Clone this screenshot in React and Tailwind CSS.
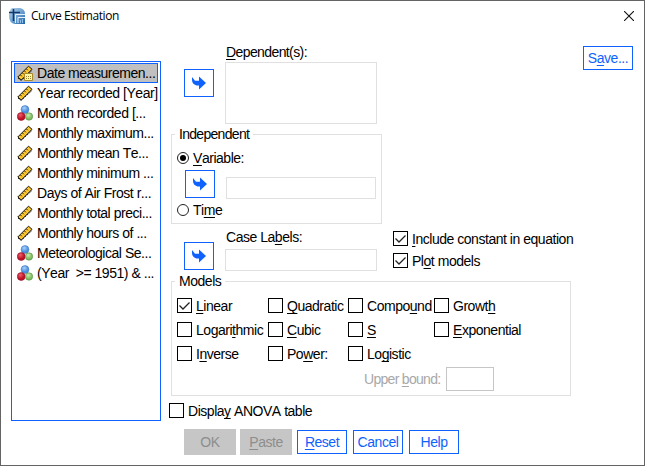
import React from "react";

function Ruler({ calc }) {
  return (
    <svg width="16" height="16" viewBox="0 0 16 16" className="shrink-0">
      <path d="M.8 12 11.500 1.200 15 4.300 4.300 15Z" fill="#fdc72f" stroke="#111" strokeWidth="1" />
      <path d="M3.500 10l1.300 1.300M5.500 8l1.300 1.300M7.500 6l1.300 1.300M9.500 4l1.300 1.300" stroke="#222" />
      <path d="M1 13 4 15.500 15 5.500" fill="none" stroke="#222" strokeWidth="1" strokeDasharray="2 1" />
      {calc && (
        <g>
          <path d="M7.500 8.500h8v7h-8z" fill="#fff6a0" stroke="#a98a28" />
          <path d="M9 11.500h5M9 13.500h5" stroke="#9b8230" strokeDasharray="1 1" />
        </g>
      )}
    </svg>
  );
}

function Nominal() {
  return (
    <svg width="16" height="16" viewBox="0 0 16 16" className="shrink-0">
      <defs>
        <radialGradient id="nb" cx=".4" cy=".3"><stop offset="0" stopColor="#a9d3ff" /><stop offset="1" stopColor="#4d8fe0" /></radialGradient>
        <radialGradient id="nr" cx=".4" cy=".3"><stop offset="0" stopColor="#f0606c" /><stop offset="1" stopColor="#be1026" /></radialGradient>
        <radialGradient id="ng" cx=".4" cy=".3"><stop offset="0" stopColor="#c9efb0" /><stop offset="1" stopColor="#7fbd62" /></radialGradient>
      </defs>
      <circle cx="8" cy="4.500" r="3.900" fill="url(#nb)" stroke="#3c78c0" strokeWidth=".6" />
      <circle cx="4.200" cy="11.500" r="3.900" fill="url(#nr)" stroke="#901020" strokeWidth=".6" />
      <circle cx="12" cy="11.500" r="3.700" fill="url(#ng)" stroke="#4f8a3c" strokeWidth=".6" />
    </svg>
  );
}

function AppIcon() {
  return (
    <svg width="16" height="16" viewBox="0 0 16 16" className="shrink-0">
      <defs>
        <linearGradient id="ai" x1="0" y1="0" x2="1" y2="1"><stop offset="0" stopColor="#b9d3ea" /><stop offset=".5" stopColor="#6fa3d2" /><stop offset="1" stopColor="#1d62a8" /></linearGradient>
      </defs>
      <path d="M3 0h8q5 1 5 6v10H6Q0 15 0 8 0 2 3 0Z" fill="url(#ai)" />
      <path d="M0 4.500h11M4.500 1v12" stroke="#12386e" strokeWidth="1.600" />
      <path d="M6.500 15V6.500H16M9 15V9.500h7" fill="none" stroke="#e4f0fa" strokeWidth="1" />
      <path d="M11.500 15v-3M13.500 15v-4" stroke="#8fc0ea" />
    </svg>
  );
}

/* The letter after "_" is the keyboard mnemonic. */
function Label({ text, className = "" }) {
  const i = text.indexOf("_");
  return (
    <span className={`whitespace-pre ${className}`}>
      {i < 0 ? text : (
        <>
          {text.slice(0, i)}
          <span className="underline decoration-1 underline-offset-2 [text-decoration-skip-ink:none]">{text[i + 1]}</span>
          {text.slice(i + 2)}
        </>
      )}
    </span>
  );
}

function Check({ text, checked, className = "" }) {
  return (
    <div className={`flex h-[15px] items-center gap-1 ${className}`}>
      <span className="h-[15px] w-[15px] shrink-0 border border-black">
        {checked && (
          <svg width="13" height="13" viewBox="0 0 13 13" className="block">
            <path d="M1.500 6.500 5 10 11.500 3.500" fill="none" stroke="#222" strokeWidth="1.300" />
          </svg>
        )}
      </span>
      <Label text={text} />
    </div>
  );
}

function Radio({ text, checked }) {
  return (
    <div className="flex h-3 items-center gap-1">
      <span className="flex h-3 w-3 shrink-0 items-center justify-center rounded-full border border-[#222]">
        {checked && <span className="h-1.5 w-1.5 rounded-full bg-black" />}
      </span>
      <Label text={text} />
    </div>
  );
}

function Move({ className = "" }) {
  return (
    <button className={`flex h-7 w-[30px] shrink-0 items-center justify-center border border-[#0f62fe] ${className}`}>
      <svg width="14" height="14" viewBox="0 0 14 14">
        <path d="M0 1 3 4.800H7V.500L14 7 7 13.500V9.500H4.500Q0 8 0 4Z" fill="#0f62fe" />
      </svg>
    </button>
  );
}

function Button({ text, className = "" }) {
  return (
    <button className={`flex h-6 w-[50px] shrink-0 items-center justify-center border border-[#0f62fe] text-[#0f62fe] ${className}`}>
      <Label text={text} />
    </button>
  );
}

const variables = [
  ["calc", "Date measuremen..."],
  ["scale", "Year recorded [Year]"],
  ["nominal", "Month recorded [..."],
  ["scale", "Monthly maximum..."],
  ["scale", "Monthly mean Te..."],
  ["scale", "Monthly minimum ..."],
  ["scale", "Days of Air Frost r..."],
  ["scale", "Monthly total preci..."],
  ["scale", "Monthly hours of ..."],
  ["nominal", "Meteorological Se..."],
  ["nominal", "(Year  >= 1951) & ..."],
];

const models = ["_Linear", "_Quadratic", "Compo_und", "Growt_h", "Logari_thmic", "_Cubic", "_S", "_Exponential", "I_nverse", "Po_wer:", "Lo_gistic"];

export default function App() {
  return (
    <div className="flex h-[466px] w-[645px] flex-col overflow-hidden border border-[#646464] bg-white font-['Liberation_Sans',Arial,sans-serif] text-[14px] leading-4 tracking-[-0.47px] text-black [font-kerning:none]">
      <header className="flex h-[29px] shrink-0 items-center justify-between pr-[10px] pl-2">
        <div className="flex items-center gap-[6px]">
          <AppIcon />
          <span className="font-['Open_Sans',sans-serif] text-[12px] tracking-[-0.45px]">Curve Estimation</span>
        </div>
        <svg width="10" height="10" viewBox="0 0 10 10">
          <path d="M0 0 10 10M10 0 0 10" stroke="#111" strokeWidth="1.100" />
        </svg>
      </header>

      <main className="flex flex-1">
        <div className="mt-[31px] ml-[10px] h-[360px] w-[150px] shrink-0 border border-[#0f62fe] px-[2px] pt-[1px]">
          {variables.map(([kind, name], i) => (
            <div key={name} className={`flex h-5 w-36 items-center gap-1 border pl-[2px] ${i === 0 ? "border-[#0f62fe] bg-[#c0c0c0]" : "border-transparent"}`}>
              {kind === "nominal" ? <Nominal /> : <Ruler calc={kind === "calc"} />}
              <Label text={name} />
            </div>
          ))}
        </div>

        <div className="flex flex-1 flex-col">
          <div className="mt-[14px] flex h-20">
            <Move className="mt-[25px] ml-[23px]" />
            <div className="ml-[11px] w-[152px]">
              <div className="h-[18px] pl-px"><Label text="_Dependent(s):" className="tracking-[-0.6px]" /></div>
              <div className="h-[62px] border border-[#e0e0e0]" />
            </div>
            <Button text="S_ave..." className="mt-[2px] ml-[206px]" />
          </div>

          <fieldset className="mt-[2px] ml-[10px] h-[98px] w-[211px] border border-[#e0e0e0] px-[5px]">
            <legend className="ml-[-2px] h-4 px-1 tracking-[-0.7px]">Independent</legend>
            <div className="mt-[10px]"><Radio text="_Variable:" checked /></div>
            <div className="mt-[6px] flex h-7 pl-2">
              <Move />
              <div className="mt-[7px] ml-[11px] h-[22px] w-[150px] border border-[#e0e0e0]" />
            </div>
            <div className="mt-[6px]"><Radio text="Ti_me" /></div>
          </fieldset>

          <div className="mt-[5px] flex h-[42px]">
            <Move className="mt-[13px] ml-[23px]" />
            <div className="ml-[11px] w-[152px]">
              <div className="h-5 pl-px"><Label text="Case La_bels:" /></div>
              <div className="h-[22px] border border-[#e0e0e0]" />
            </div>
            <div className="mt-[2px] ml-4 flex flex-col gap-[7px]">
              <Check text="_Include constant in equation" checked />
              <Check text="Pl_ot models" checked />
            </div>
          </div>

          <fieldset className="mt-[2px] ml-[10px] h-[123px] w-[400px] border border-[#e0e0e0] px-[5px]">
            <legend className="ml-[-2px] h-4 px-1">Models</legend>
            <div className="mt-[9px] grid grid-cols-[91px_80px_86px_120px] gap-y-[9px]">
              {models.map((m, i) => <Check key={m} text={m} checked={i === 0} />)}
            </div>
            <div className="mt-[6px] flex h-6 items-center pl-[187px] text-[#a8a8a8]">
              <Label text="Upper _bound:" className="w-[82px] tracking-[-0.7px]" />
              <span className="h-6 w-12 border border-[#c6c6c6]" />
            </div>
          </fieldset>

          <Check text="Displa_y ANOVA table" className="mt-[7px] ml-2" />

          <div className="mt-[11px] ml-[23px] flex items-center">
            <button className="h-[26px] w-[52px] bg-[#c6c6c6] text-[#8d8d8d]"><Label text="OK" /></button>
            <button className="ml-1 h-[26px] w-[52px] bg-[#c6c6c6] text-[#8d8d8d]"><Label text="_Paste" /></button>
            <Button text="_Reset" className="ml-[5px]" />
            <Button text="Cancel" className="ml-[6px]" />
            <Button text="Help" className="ml-[6px]" />
          </div>
        </div>
      </main>
    </div>
  );
}
